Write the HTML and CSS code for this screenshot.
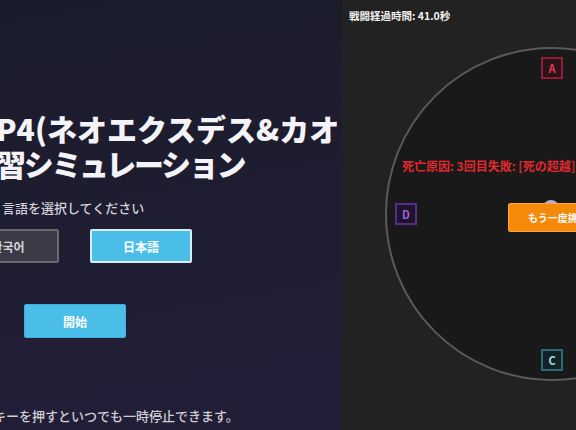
FILE: index.html
```html
<!DOCTYPE html>
<html lang="ja">
<head>
    <meta charset="UTF-8">
    <meta name="viewport" content="width=device-width, initial-scale=1.0">
    <title>P4 練習シミュレーション</title>
    <link rel="stylesheet" href="styles.css">
</head>
<body>
    <div class="screen">
        <div class="start-panel">
            <h1 class="title">P4(ネオエクスデス&amp;カオ<br><span class="title-tight">習シミュレーション</span></h1>
            <p class="lang-label">言語を選択してください</p>
            <div class="lang-buttons">
                <button class="lang-btn" lang="ko">한국어</button>
                <button class="lang-btn active">日本語</button>
            </div>
            <button class="start-btn">開始</button>
            <p class="pause-hint">キーを押すといつでも一時停止できます。</p>
        </div>

        <div class="battle-panel">
            <div class="timer">戦闘経過時間: 41.0秒</div>
            <div class="arena">
                <div class="marker marker-a">A</div>
                <div class="marker marker-d">D</div>
                <div class="marker marker-c">C</div>
                <div class="player"></div>
                <div class="death-cause">死亡原因: 3回目失敗: [死の超越]</div>
                <button class="retry-btn">もう一度挑戦</button>
            </div>
        </div>
    </div>
</body>
</html>
```

FILE: styles.css
```css
* {
    box-sizing: border-box;
}
body {
    margin: 0;
    background-color: #212121;
    font-family: "Noto Sans CJK JP", "Noto Sans CJK KR", "Noto Sans", sans-serif;
}
.screen {
    display: flex;
    width: 576px;
    height: 430px;
    overflow: hidden;
}

/* start screen */
.start-panel {
    width: 342px;
    flex-shrink: 0;
    overflow: hidden;
    padding-top: 111px;
    display: flex;
    flex-direction: column;
    align-items: flex-start;
    background: linear-gradient(170deg, #1b1c2b 0%, #1e1d31 50%, #241e39 100%);
    color: #f4f4f8;
}
.title {
    margin: 0 0 0 -4px;
    font-size: 30px;
    line-height: 35px;
    font-weight: 900;
    white-space: nowrap;
}
.title-tight {
    letter-spacing: -2.3px;
}
.lang-label {
    margin: 19px 0 0 2px;
    font-size: 13px;
    line-height: 16px;
    font-weight: 500;
    color: #d2d2da;
}
.lang-buttons {
    display: flex;
    gap: 31px;
    margin: 13px 0 0 -43px;
}
.lang-btn, .start-btn {
    width: 102px;
    height: 34px;
    font-family: inherit;
    font-size: 12px;
    font-weight: 700;
    color: #fff;
    border-radius: 2px;
    cursor: pointer;
}
.lang-btn {
    background-color: #3b3a46;
    border: 2px solid #6a6972;
    color: #d4d4d8;
}
.lang-btn.active {
    background-color: #4bbde9;
    border-color: #d6eefa;
    color: #fff;
}
.start-btn {
    margin: 41px 0 0 24px;
    background-color: #4bbde9;
    border: 1px solid #3fb0dc;
}
.pause-hint {
    margin: 70px 0 0 -7px;
    font-size: 13px;
    line-height: 16px;
    font-weight: 500;
    color: #cfcfd6;
    white-space: nowrap;
}

/* battle screen */
.battle-panel {
    flex: 1;
    position: relative;
    overflow: hidden;
    background-color: #222222;
}
.timer {
    padding: 9px 7px;
    font-size: 10.5px;
    line-height: 14px;
    font-weight: 700;
    color: #f0f0f0;
}
.arena {
    position: absolute;
    left: 43px;
    top: 47px;
    width: 334px;
    height: 334px;
    border-radius: 50%;
    border: 2px solid #5a5a5a;
    background-color: #191919;
}
.marker {
    position: absolute;
    width: 22px;
    height: 22px;
    border: 2px solid;
    display: flex;
    align-items: center;
    justify-content: center;
    font-size: 11px;
    font-weight: 700;
}
.marker-a {
    left: 154px;
    top: 8px;
    border-color: #8f1d33;
    background-color: #2a1419;
    color: #e6395a;
}
.marker-d {
    left: 8px;
    top: 154px;
    border-color: #5b2a8c;
    background-color: #1e1428;
    color: #9d5fe0;
}
.marker-c {
    left: 154px;
    top: 300px;
    border-color: #2e6b7a;
    background-color: #142126;
    color: #a6dce8;
}
.player {
    position: absolute;
    left: 156px;
    top: 151px;
    width: 16px;
    height: 16px;
    border-radius: 50%;
    background-color: #b4a6e0;
}
.death-cause {
    position: absolute;
    left: 15px;
    top: 110px;
    font-size: 12px;
    line-height: 14px;
    font-weight: 700;
    color: #e0282f;
    white-space: nowrap;
}
.retry-btn {
    position: absolute;
    left: 121px;
    top: 154px;
    width: 120px;
    height: 29px;
    padding: 0 0 0 19px;
    text-align: left;
    background-color: #f5890a;
    border: 1px solid #ffa640;
    border-radius: 2px;
    font-family: inherit;
    font-size: 10px;
    font-weight: 700;
    color: #fff;
    cursor: pointer;
}
```
